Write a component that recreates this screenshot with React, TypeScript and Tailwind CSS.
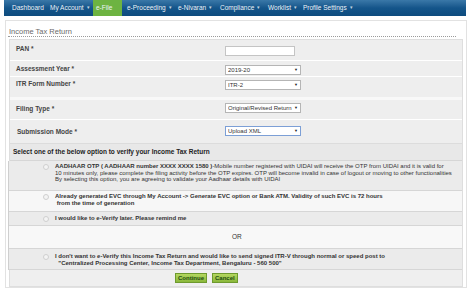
// Income Tax Return e-verify screen

const navItems = [
  { label: 'Dashboard', w: 'w-[38px]', caret: false },
  { label: 'My Account', w: 'w-[46px]', caret: true },
  { label: 'e-File', w: 'w-[29px]', caret: false, active: true },
  { label: 'e-Proceeding', w: 'w-[53px]', caret: true, pl: 'pl-[5px]' },
  { label: 'e-Nivaran', w: 'w-[42px]', caret: true },
  { label: 'Compliance', w: 'w-[48px]', caret: true },
  { label: 'Worklist', w: 'w-[35px]', caret: true },
  { label: 'Profile Settings', w: 'w-[70px]', caret: true },
]

function Select({ value, focused }: { value: string; focused?: boolean }) {
  return (
    <div
      className={`flex items-center w-[76px] h-[10px] bg-white border px-[2px] text-[6px] text-[#333] ${
        focused ? 'border-[#7c9fd6]' : 'border-[#b5b5b5]'
      }`}
    >
      <span className="flex-1 overflow-hidden whitespace-nowrap">{value}</span>
      <span className="ml-[1px] text-[4px] text-[#222]">▼</span>
    </div>
  )
}

function Radio() {
  return <span className="mt-[1px] w-[6px] h-[6px] shrink-0 rounded-full border border-[#cfcfcf] bg-[#f4f4f4]" />
}

export default function App() {
  return (
    <div className="w-[474px] h-[292px] bg-white overflow-hidden font-['Liberation_Sans',Arial,sans-serif] text-[#333]">
      {/* Top navigation */}
      <div className="ml-[4px] w-[462px] h-[16px] flex items-stretch pl-[5px] bg-gradient-to-b from-[#3a78a8] via-[#14558a] to-[#0e4c7e] text-[#eef3f8] text-[6.5px]">
        {navItems.map((item) => (
          <div
            key={item.label}
            className={`${item.w} ${item.pl ?? 'pl-[3px]'} flex items-center whitespace-nowrap ${
              item.active ? 'bg-[#6db341]' : ''
            }`}
          >
            {item.label}
            {item.caret && <span className="ml-[3px] text-[5px] opacity-80">▾</span>}
          </div>
        ))}
      </div>

      {/* Panel */}
      <div className="mt-[4px] ml-[5px] w-[462px] h-[268px] border border-[#e2e2e2] bg-white">
        <div className="mt-[6px] ml-[2px] w-[448px] h-[10px] border-b border-dotted border-[#9a9a9a] text-[7.5px] leading-[9px] text-[#6a6a6a] pl-[1px]">
          Income Tax Return
        </div>

        <div className="mt-[2px] ml-[3px] w-[454px] border border-[#dedede] bg-[#f4f4f4] text-[6.5px]">
          {/* Form rows */}
          <div className="flex h-[21px] bg-[#eeeeee] border-b border-white">
            <div className="w-[215px] pl-[6px] pt-[4px] font-bold text-[#444]">PAN *</div>
            <div className="pt-[6px]">
              <div className="w-[70px] h-[10px] bg-white border border-[#c4c4c4]" />
            </div>
          </div>
          <div className="flex h-[16px] bg-[#eeeeee] border-b border-white">
            <div className="w-[215px] pl-[6px] pt-[3px] font-bold text-[#444]">Assessment Year *</div>
            <div className="pt-[4px]">
              <Select value="2019-20" />
            </div>
          </div>
          <div className="flex h-[20px] bg-[#eeeeee]">
            <div className="w-[215px] pl-[6px] pt-[2px] font-bold text-[#444]">ITR Form Number *</div>
            <div className="pt-[3px]">
              <Select value="ITR-2" />
            </div>
          </div>
          <div className="h-[3px] bg-[#f8f8f8]" />
          <div className="flex h-[20px] bg-[#eeeeee] border-b border-white">
            <div className="w-[215px] pl-[6px] pt-[4px] font-bold text-[#444]">Filing Type *</div>
            <div className="pt-[3px]">
              <Select value="Original/Revised Return" />
            </div>
          </div>
          <div className="flex h-[24px] bg-[#eeeeee] border-b border-[#dcdcdc]">
            <div className="w-[215px] pl-[7px] pt-[7px] font-bold text-[#444]">Submission Mode *</div>
            <div className="pt-[6px]">
              <Select value="Upload XML" focused />
            </div>
          </div>

          {/* Verify options */}
          <div className="h-[17px] flex items-center pl-[3px] bg-[#e8e8e8] border-b border-[#d6d6d6] font-bold text-[#222]">
            Select one of the below option to verify your Income Tax Return
          </div>

          <div className="border-l border-[#cfcfcf] ml-[-2px]">
            <div className="flex gap-[6px] h-[30px] pl-[34px] pt-[2px] bg-[#ebebeb] border-b border-[#d6d6d6] text-[6px] leading-[6.6px] whitespace-nowrap">
              <Radio />
              <div>
                <span className="font-bold">AADHAAR OTP ( AADHAAR number XXXX XXXX 1580 )</span>-Mobile number registered
                with UIDAI will receive the OTP from UIDAI and it is valid for
                <br />
                10 minutes only, please complete the filing activity before the OTP expires. OTP will become invalid in
                case of logout or moving to other functionalities
                <br />
                By selecting this option, you are agreeing to validate your Aadhaar details with UIDAI
              </div>
            </div>

            <div className="flex gap-[6px] h-[21px] pl-[34px] pt-[2px] bg-[#f7f7f7] border-b border-[#d6d6d6] text-[6px] leading-[7px] font-bold whitespace-nowrap">
              <Radio />
              <div>
                Already generated EVC through My Account -&gt; Generate EVC option or Bank ATM. Validity of such EVC is
                72 hours
                <br />
                &nbsp;from the time of generation
              </div>
            </div>

            <div className="flex items-center gap-[6px] h-[14px] pl-[34px] bg-[#ebebeb] border-b border-[#d6d6d6] text-[6px] font-bold">
              <Radio />
              <div>I would like to e-Verify later. Please remind me</div>
            </div>

            <div className="flex items-center h-[23px] pl-[223px] bg-[#f8f8f8] border-b border-[#d6d6d6] text-[6.5px]">
              OR
            </div>

            <div className="flex gap-[6px] h-[21px] pl-[34px] pt-[4px] bg-[#ebebeb] border-b border-[#d6d6d6] text-[6px] leading-[6.6px] font-bold whitespace-nowrap">
              <Radio />
              <div>
                I don't want to e-Verify this Income Tax Return and would like to send signed ITR-V through normal or
                speed post to
                <br />
                &nbsp;&nbsp;"Centralized Processing Center, Income Tax Department, Bengaluru - 560 500"
              </div>
            </div>
          </div>

          <div className="flex items-center gap-[5px] h-[16px] pl-[165px] bg-[#efefef]">
            <button className="h-[10px] px-[2px] bg-gradient-to-b from-[#b4d760] to-[#8ab83a] border border-[#6e9a2e] text-[6px] font-bold text-[#234d12] leading-none">
              Continue
            </button>
            <button className="h-[10px] px-[2px] bg-gradient-to-b from-[#b4d760] to-[#8ab83a] border border-[#6e9a2e] text-[6px] font-bold text-[#234d12] leading-none">
              Cancel
            </button>
          </div>
        </div>
      </div>
    </div>
  )
}
